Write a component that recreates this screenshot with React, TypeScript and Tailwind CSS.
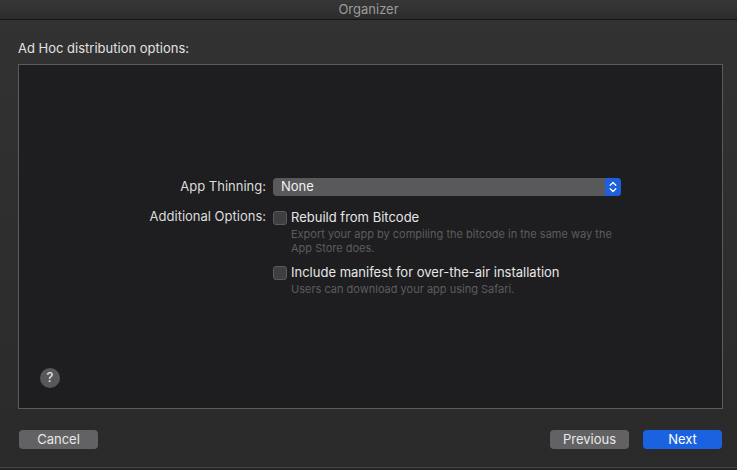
import React from 'react';

function Checkbox() {
  return (
    <span className="mt-[2px] block h-[14px] w-[14px] shrink-0 rounded-[3px] border border-[#5a5a5c] bg-[#3f3f41]" />
  );
}

function Stepper() {
  return (
    <span className="flex h-[18px] w-[16px] items-center justify-center rounded-r-[4px] bg-[#1d5fdc]">
      <svg width="8" height="12" viewBox="0 0 8 12" fill="none" stroke="#ffffff" strokeWidth="1.3" strokeLinecap="round" strokeLinejoin="round">
        <path d="M1.2 4.2 L4 1.5 L6.8 4.2" />
        <path d="M1.2 7.8 L4 10.5 L6.8 7.8" />
      </svg>
    </span>
  );
}

export default function App() {
  return (
    <div
      className="flex h-[470px] w-[737px] flex-col overflow-hidden bg-[#2e2e2f] text-[13px] text-[#dedede]"
      style={{ fontFamily: 'Inter, "Liberation Sans", sans-serif' }}
    >
      {/* title bar */}
      <div className="flex h-[20px] shrink-0 items-center justify-center border-b border-[#141414] bg-gradient-to-b from-[#373737] to-[#2c2c2c] text-[#9c9c9c]">
        Organizer
      </div>

      <div className="flex flex-1 flex-col px-[18px] bg-gradient-to-b from-[#323233] to-[#2a2a2b]">
        <div className="pt-[20px] pb-[8px] leading-[16px] text-[#e2e2e2]">Ad Hoc distribution options:</div>

        {/* panel */}
        <div className="flex h-[345px] w-[705px] flex-col border border-[#5b5b5b] bg-[#1e1e20]">
          <div className="mt-[113px] grid grid-cols-[247px_348px] gap-x-[7px]">
            <div className="flex h-[18px] items-center justify-end text-[#dcdcdc]">App Thinning:</div>
            <div className="flex h-[18px] items-center rounded-[4px] bg-[#59595b]">
              <span className="flex-1 pl-[8px] text-[#f0f0f0]">None</span>
              <Stepper />
            </div>

            <div className="mt-[13px] flex h-[16px] items-center justify-end text-[#dcdcdc]">Additional Options:</div>
            <div className="mt-[13px] flex flex-col">
              <div className="flex items-start gap-[4px]">
                <Checkbox />
                <span className="leading-[16px] text-[#e6e6e6]">Rebuild from Bitcode</span>
              </div>
              <div className="pl-[18px] pt-[2px] text-[11px] leading-[14px] text-[#5c5c5e]">
                Export your app by compiling the bitcode in the same way the App Store does.
              </div>

              <div className="mt-[9px] flex items-start gap-[4px]">
                <Checkbox />
                <span className="leading-[16px] text-[#e6e6e6]">Include manifest for over-the-air installation</span>
              </div>
              <div className="pl-[18px] pt-[2px] text-[11px] leading-[14px] text-[#5c5c5e]">
                Users can download your app using Safari.
              </div>
            </div>
          </div>

          <div className="mt-auto pb-[20px] pl-[21px]">
            <span className="flex h-[20px] w-[20px] items-center justify-center rounded-full bg-[#58585a] text-[13px] font-medium text-[#e0e0e0]">
              ?
            </span>
          </div>
        </div>

        {/* buttons */}
        <div className="mt-[21px] flex w-[704px] items-center pl-px">
          <button className="h-[19px] w-[79px] rounded-[4px] bg-[#626264] text-[13px] leading-[19px] text-[#e8e8e8]">Cancel</button>
          <div className="flex-1" />
          <button className="h-[19px] w-[79px] rounded-[4px] bg-[#626264] text-[13px] leading-[19px] text-[#e8e8e8]">Previous</button>
          <button className="ml-[14px] h-[19px] w-[79px] rounded-[4px] bg-[#1b62e0] text-[13px] leading-[19px] text-white">Next</button>
        </div>
      </div>
      <div className="h-[3px] shrink-0 border-t border-[#454545] bg-[#262626]" />
    </div>
  );
}
